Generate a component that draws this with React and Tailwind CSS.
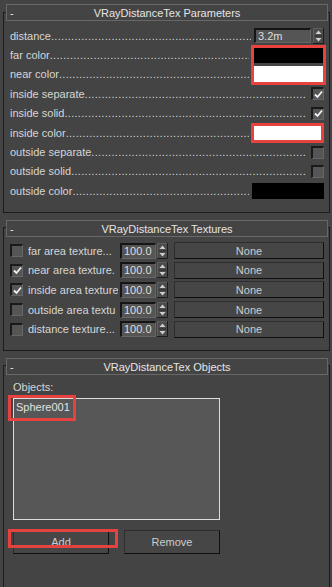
import React from 'react';

const DOTS = '.'.repeat(110);

function Check({ checked }) {
    return (
        <div className="w-[13px] h-[13px] shrink-0 bg-[#555555] border-t-2 border-l-2 border-b border-r border-t-[#1a1a1a] border-l-[#1a1a1a] border-b-[#666666] border-r-[#666666] flex items-center justify-center">
            {checked && (
                <svg width="9" height="9" viewBox="0 0 9 9">
                    <path d="M1 4.5 L3.5 7 L8 1.5" fill="none" stroke="#f2f2f2" strokeWidth="1.8" />
                </svg>
            )}
        </div>
    );
}

function Spinner() {
    return (
        <svg width="11" height="16" viewBox="0 0 11 16" className="shrink-0">
            <rect x="0" y="0" width="11" height="16" fill="#4b4b4b" />
            <path d="M0.5 16 V0.5 H10" fill="none" stroke="#5e5e5e" />
            <path d="M10.5 0 V15.5 H0" fill="none" stroke="#1c1c1c" />
            <path d="M2 8 H9" stroke="#2a2a2a" />
            <polygon points="5.5,2.5 2.5,6 8.5,6" fill="#cfcfcf" />
            <polygon points="2.5,10 8.5,10 5.5,13.5" fill="#cfcfcf" />
        </svg>
    );
}

function Field({ value, className }) {
    return (
        <div className={`h-[15px] bg-[#555555] border-t-2 border-l-2 border-b border-r border-t-[#151515] border-l-[#151515] border-b-[#666666] border-r-[#666666] pl-[2px] leading-[12px] text-[#dedede] whitespace-nowrap overflow-hidden ${className}`}>
            {value}
        </div>
    );
}

function MaxButton({ label, className }) {
    return (
        <div className={`bg-[#464646] border border-t-[#2e2e2e] border-l-[#2e2e2e] border-b-[#0f0f0f] border-r-[#0f0f0f] flex items-center justify-center text-[#cccccc] ${className}`}>
            {label}
        </div>
    );
}

function Swatch({ color }) {
    return <div className={`w-[72px] h-[16px] shrink-0 ${color}`} />;
}

function ParamRow({ label, children, gap }) {
    return (
        <div className="flex items-center h-[19.4px] pl-[6px] pr-[5px]">
            <div className={`flex-1 min-w-0 overflow-hidden whitespace-nowrap text-[#d6d6d6] ${gap}`}>
                {label}<span className="tracking-[0.3px]">{DOTS}</span>
            </div>
            {children}
        </div>
    );
}

function Rollout({ title, frame, titleOffset, children }) {
    return (
        <div className={`border border-[#1c1c1c] flex flex-col ${frame}`}>
            <div className={`ml-[2px] mr-[1px] h-[17px] shrink-0 border border-[#686868] bg-[#444444] grid grid-cols-[24px_1fr_24px] items-center text-[#e4e4e4] ${titleOffset}`}>
                <span className="pl-[3px]">-</span>
                <span className="text-center whitespace-nowrap">{title}</span>
                <span />
            </div>
            {children}
        </div>
    );
}

const textures = [
    { label: 'far area texture...', checked: false },
    { label: 'near area texture.', checked: true },
    { label: 'inside area texture', checked: true },
    { label: 'outside area textu', checked: false },
    { label: 'distance texture...', checked: false },
];

export default function App() {
    return (
        <div className="relative w-[332px] h-[587px] overflow-hidden bg-[#444444] pl-[3px] pr-[2px] pt-[12px] font-['Liberation_Sans',Arial,sans-serif] text-[11px] leading-[14px]">
            <Rollout title="VRayDistanceTex Parameters" frame="h-[201px]" titleOffset="-mt-[9px]">
                <div className="pt-[5px] flex flex-col">
                    <ParamRow label="distance" gap="mr-[3px]">
                        <Field value="3.2m" className="w-[57px] shrink-0" />
                        <div className="ml-[2px]"><Spinner /></div>
                    </ParamRow>
                    <ParamRow label="far color" gap="mr-[3px]">
                        <Swatch color="bg-black" />
                    </ParamRow>
                    <ParamRow label="near color" gap="mr-[3px]">
                        <Swatch color="bg-white" />
                    </ParamRow>
                    <ParamRow label="inside separate" gap="mr-[5px]">
                        <Check checked />
                    </ParamRow>
                    <ParamRow label="inside solid" gap="mr-[5px]">
                        <Check checked />
                    </ParamRow>
                    <ParamRow label="inside color" gap="mr-[3px]">
                        <Swatch color="bg-white" />
                    </ParamRow>
                    <ParamRow label="outside separate" gap="mr-[5px]">
                        <Check />
                    </ParamRow>
                    <ParamRow label="outside solid" gap="mr-[5px]">
                        <Check />
                    </ParamRow>
                    <ParamRow label="outside color" gap="mr-[3px]">
                        <Swatch color="bg-black" />
                    </ParamRow>
                </div>
            </Rollout>

            <Rollout title="VRayDistanceTex Textures" frame="mt-[14px] h-[124px]" titleOffset="-mt-[8px]">
                <div className="pt-[4px] flex flex-col">
                    {textures.map((t) => (
                        <div key={t.label} className="flex items-center h-[19.6px] pl-[6px] pr-[5px]">
                            <Check checked={t.checked} />
                            <div className="ml-[5px] w-[90px] shrink-0 overflow-hidden whitespace-nowrap text-[#d6d6d6]">{t.label}</div>
                            <Field value="100.0" className="ml-[2px] w-[36px] h-[16px] shrink-0" />
                            <div className="ml-[1px]"><Spinner /></div>
                            <MaxButton label="None" className="ml-[6px] flex-1 h-[17px]" />
                        </div>
                    ))}
                </div>
            </Rollout>

            <Rollout title="VRayDistanceTex Objects" frame="mt-[14px] h-[240px]" titleOffset="-mt-[8px]">
                <div className="pt-[5px] pl-[9px] flex flex-col">
                    <div className="h-[14px] text-[#d6d6d6]">Objects:</div>
                    <div className="mt-[4px] w-[207px] h-[122px] bg-[#575757] border border-[#dcdcdc] pl-[2px] pt-[1px] text-[#e2e2e2]">
                        Sphere001
                    </div>
                    <div className="mt-[10px] flex gap-[15px]">
                        <MaxButton label="Add" className="w-[96px] h-[24px]" />
                        <MaxButton label="Remove" className="w-[96px] h-[24px]" />
                    </div>
                </div>
            </Rollout>

            {/* red annotation boxes */}
            <div className="absolute left-[251px] top-[45px] w-[75px] h-[40px] border-[3px] border-[#e64340]" />
            <div className="absolute left-[251px] top-[123px] w-[73px] h-[20px] border-[3px] border-[#e64340]" />
            <div className="absolute left-[8px] top-[395px] w-[68px] h-[26px] border-[3px] border-[#e64340]" />
            <div className="absolute left-[8px] top-[529px] w-[110px] h-[19px] border-[3px] border-[#e64340]" />
        </div>
    );
}
